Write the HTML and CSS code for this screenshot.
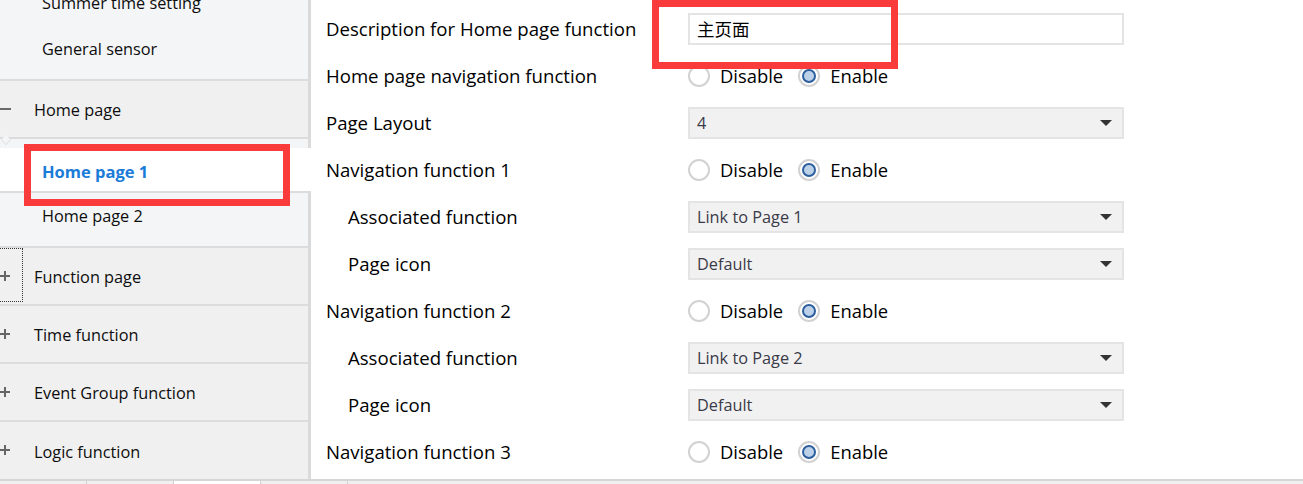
FILE: index.html
```html
<!DOCTYPE html>
<html lang="en">
<head>
<meta charset="utf-8">
<title>Home page 1</title>
<link rel="stylesheet" href="styles.css">
</head>
<body>
<div class="app">
  <aside class="sidebar">
    <div class="group top">
      <div class="item first">Summer time setting</div>
      <div class="item">General sensor</div>
    </div>
    <div class="header open"><span class="toggle minus"></span><span class="label">Home page</span><span class="notch"></span></div>
    <div class="group sub">
      <div class="item selected">Home page 1</div>
      <div class="item">Home page 2</div>
    </div>
    <div class="header"><span class="toggle plus focus"></span><span class="label">Function page</span></div>
    <div class="header"><span class="toggle plus"></span><span class="label">Time function</span></div>
    <div class="header"><span class="toggle plus"></span><span class="label">Event Group function</span></div>
    <div class="header last"><span class="toggle plus"></span><span class="label">Logic function</span></div>
  </aside>

  <main class="content">
    <div class="row">
      <div class="lbl">Description for Home page function</div>
      <div class="ctl"><div class="textbox">主页面</div></div>
    </div>
    <div class="row">
      <div class="lbl">Home page navigation function</div>
      <div class="ctl radios">
        <span class="radio"></span><span class="rtext">Disable</span>
        <span class="radio on"></span><span class="rtext">Enable</span>
      </div>
    </div>
    <div class="row">
      <div class="lbl">Page Layout</div>
      <div class="ctl"><div class="select">4<span class="arrow"></span></div></div>
    </div>
    <div class="row">
      <div class="lbl">Navigation function 1</div>
      <div class="ctl radios">
        <span class="radio"></span><span class="rtext">Disable</span>
        <span class="radio on"></span><span class="rtext">Enable</span>
      </div>
    </div>
    <div class="row">
      <div class="lbl sublbl">Associated function</div>
      <div class="ctl"><div class="select">Link to Page 1<span class="arrow"></span></div></div>
    </div>
    <div class="row">
      <div class="lbl sublbl">Page icon</div>
      <div class="ctl"><div class="select">Default<span class="arrow"></span></div></div>
    </div>
    <div class="row">
      <div class="lbl">Navigation function 2</div>
      <div class="ctl radios">
        <span class="radio"></span><span class="rtext">Disable</span>
        <span class="radio on"></span><span class="rtext">Enable</span>
      </div>
    </div>
    <div class="row">
      <div class="lbl sublbl">Associated function</div>
      <div class="ctl"><div class="select">Link to Page 2<span class="arrow"></span></div></div>
    </div>
    <div class="row">
      <div class="lbl sublbl">Page icon</div>
      <div class="ctl"><div class="select">Default<span class="arrow"></span></div></div>
    </div>
    <div class="row">
      <div class="lbl">Navigation function 3</div>
      <div class="ctl radios">
        <span class="radio"></span><span class="rtext">Disable</span>
        <span class="radio on"></span><span class="rtext">Enable</span>
      </div>
    </div>
  </main>

  <div class="highlight hl-desc"></div>
  <div class="highlight hl-item"></div>
</div>
<div class="tabs">
  <span class="tab"></span><span class="tab"></span><span class="tab active"></span><span class="tab"></span>
</div>
</body>
</html>
```
FILE: styles.css
```css
* { box-sizing: border-box; }
html, body { margin: 0; padding: 0; }
body {
  width: 1303px;
  height: 484px;
  overflow: hidden;
  background: #ffffff;
  font-family: "Open Sans", "Noto Sans", "Noto Sans CJK SC", sans-serif;
  font-size: 16.3px;
  color: #111;
}
.app {
  position: relative;
  display: flex;
  height: 479px;
  overflow: hidden;
}

/* ---------- sidebar ---------- */
.sidebar {
  width: 311px;
  flex: none;
  display: flex;
  flex-direction: column;
  font-size: 16.3px;
}
.group {
  display: flex;
  flex-direction: column;
  background: #f4f5f7;
  border-right: 3px solid #dadada;
  border-bottom: 2px solid #dcdcdc;
  padding-bottom: 7px;
}
.group.top .item.first { margin-top: -20px; }
.group.sub { padding-top: 9px; position: relative; }
.item {
  height: 46px;
  display: flex;
  align-items: center;
  padding-left: 42px;
  color: #0d0d0d;
  white-space: nowrap;
}
.item.selected {
  height: 45px;
  padding-top: 4px;
  background: #ffffff;
  color: #1b7bd8;
  font-weight: 700;
  font-size: 16.5px;
  border-bottom: 2px solid #dcdcdc;
  margin-right: -3px;
}
.header {
  position: relative;
  height: 58px;
  display: flex;
  align-items: center;
  background: #f0f0f0;
  border-right: 3px solid #dadada;
  border-bottom: 2px solid #dcdcdc;
  flex: none;
}
.header.last { border-bottom: none; flex: 1; }
.header .label { padding-left: 34px; padding-top: 2px; color: #0d0d0d; }
.toggle {
  position: absolute;
  left: 0;
  top: 0;
  width: 23px;
  height: 56px;
}
.minus::before {
  content: "";
  position: absolute;
  left: 0;
  top: 27px;
  width: 11px;
  height: 2px;
  background: #6a6a6a;
}
.plus::before, .plus::after {
  content: "";
  position: absolute;
  background: #666;
}
.plus::before { left: 0; top: 27px; width: 10px; height: 2px; }
.plus::after { left: 4px; top: 23px; width: 2px; height: 10px; }
.focus { border: 1px dotted #333; border-left: none; height: 54px; top: 0; }
.focus::before { top: 26px; }
.focus::after { top: 22px; }
.notch {
  position: absolute;
  left: 1px;
  bottom: -8px;
  width: 10px;
  height: 10px;
  background: #f4f5f7;
  border-right: 1px solid #dcdcdc;
  border-bottom: 1px solid #dcdcdc;
  transform: rotate(45deg) scale(0.7, 0.7);
  z-index: 1;
}

/* ---------- content ---------- */
.content {
  flex: 1;
  padding-top: 5px;
  padding-left: 15px;
  display: flex;
  flex-direction: column;
}
.row {
  height: 47px;
  display: flex;
  align-items: center;
  flex: none;
}
.lbl {
  width: 362px;
  flex: none;
  color: #000;
  font-size: 18.6px;
  white-space: nowrap;
}
.sublbl { padding-left: 22px; }
.ctl {
  width: 436px;
  display: flex;
  align-items: center;
}
.textbox, .select {
  width: 436px;
  height: 32px;
  border: 2px solid #e4e4e4;
  display: flex;
  align-items: center;
  padding-left: 7px;
}
.textbox {
  background: #fff;
  font-family: "Noto Sans CJK SC", sans-serif;
  font-size: 17.5px;
  color: #000;
}
.select {
  background: #f1f1f1;
  color: #3a3a48;
  position: relative;
  font-size: 16.3px;
}
.arrow {
  position: absolute;
  right: 10px;
  top: 11px;
  width: 0;
  height: 0;
  border-left: 6px solid transparent;
  border-right: 6px solid transparent;
  border-top: 6px solid #333;
}
.radio {
  width: 22px;
  height: 22px;
  border-radius: 50%;
  border: 2px solid #d2d2d2;
  background: #fff;
  display: inline-flex;
  align-items: center;
  justify-content: center;
  flex: none;
}
.radio.on::after {
  content: "";
  width: 14px;
  height: 14px;
  border-radius: 50%;
  border: 2px solid #2d5f9f;
  background: #bcd1e8;
  box-sizing: border-box;
}
.rtext { margin-left: 10px; margin-right: 15px; color: #000; font-size: 18.4px; }

/* ---------- overlays ---------- */
.highlight {
  position: absolute;
  border: 7px solid #f93b3b;
  pointer-events: none;
}
.hl-desc { left: 652px; top: 0; width: 246px; height: 69px; }
.hl-item { left: 24px; top: 144px; width: 266px; height: 62px; }

/* ---------- bottom tabs ---------- */
.tabs {
  height: 5px;
  border-top: 2px solid #d6d6d6;
  background: #f0f0f0;
  display: flex;
}
.tab { width: 87px; border-right: 1px solid #cfcfcf; }
.tab.active { background: #fff; }
```
